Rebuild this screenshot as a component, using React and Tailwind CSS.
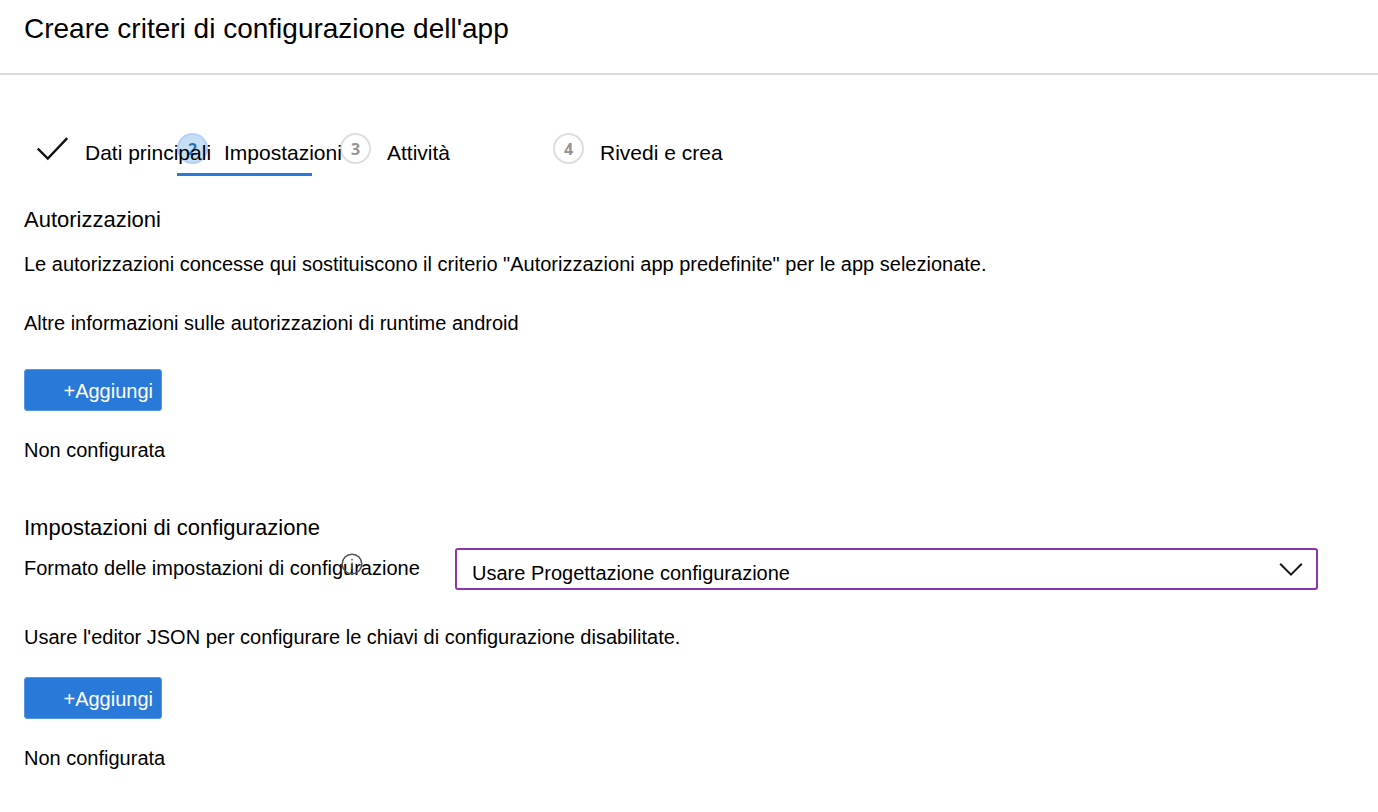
import React, { useState } from 'react';

const STEPS = [
  { label: 'Dati principali', state: 'done', width: 'w-[112px]' },
  { label: 'Impostazioni', state: 'active', width: 'w-[135px]' },
  { label: 'Attività', state: 'todo', width: 'w-[185px]' },
  { label: 'Rivedi e crea', state: 'todo', width: 'w-[185px]' },
];

const BADGES = {
  active: 'border-[#b3d1fa] bg-[#c7dff5] text-[#2a6fbf]',
  todo: 'border-[#dedede] bg-white text-[#949494]',
};

const StepMarker = ({ state, number }) => {
  if (state === 'done') {
    return (
      <svg className="w-8 h-8 shrink-0" viewBox="0 0 32 32" fill="none" stroke="#111" strokeWidth="2.4">
        <path d="M0.8 15.5 L10.8 25.5 L30.2 5.2" />
      </svg>
    );
  }
  return (
    <span className={`flex w-[31px] h-[31px] shrink-0 items-center justify-center rounded-full border-2 font-['Open_Sans',sans-serif] text-[16px] font-bold ${BADGES[state]}`}>
      {number}
    </span>
  );
};

const Step = ({ step, number }) => (
  <li className={`${step.width} shrink-0 pb-2 border-b-[3px] ${step.state === 'active' ? 'border-[#2979d9]' : 'border-transparent'}`}>
    <button type="button" className="flex items-start gap-4 whitespace-nowrap text-[21px] leading-6">
      <StepMarker state={step.state} number={number} />
      <span className="relative z-10 pt-2">{step.label}</span>
    </button>
  </li>
);

const AddButton = () => (
  <button type="button" className="flex h-[42px] w-[138px] items-center justify-end rounded-[3px] border border-[#5596e0] bg-[#2979d9] pr-2 pt-0.5 text-white">
    +Aggiungi
  </button>
);

const InfoIcon = () => (
  <svg className="absolute left-[317px] top-[5px] w-[22px] h-[22px]" viewBox="0 0 22 22" fill="none" stroke="#555" strokeWidth="1.5">
    <circle cx="11" cy="11" r="9.8" />
    <path d="M11 9.5 V16 M11 5.8 V7.4" />
  </svg>
);

export default function App() {
  const [format, setFormat] = useState('designer');

  return (
    <div className="min-h-screen bg-white font-['Liberation_Sans',Arial,sans-serif] text-[20px] leading-6 text-black">
      <header className="border-b-2 border-[#d9d9d9] px-6 pt-3 pb-7">
        <h1 className="text-[28px] leading-[33px]">Creare criteri di configurazione dell'app</h1>
      </header>

      <main className="pl-6 pr-[60px] pt-[58px] pb-10">
        <nav aria-label="Passaggi">
          <ol className="flex gap-7 pl-[13px]">
            {STEPS.map((s, i) => (
              <Step key={s.label} step={s} number={i + 1} />
            ))}
          </ol>
        </nav>

        <section className="mt-8">
          <h2 className="text-[22px] leading-6">Autorizzazioni</h2>
          <p className="mt-5">
            Le autorizzazioni concesse qui sostituiscono il criterio "Autorizzazioni app predefinite" per le app selezionate.
          </p>
          <a href="#runtime" className="mt-[35px] block w-fit">Altre informazioni sulle autorizzazioni di runtime android</a>
          <div className="mt-[34px] mb-[27px]">
            <AddButton />
          </div>
          <p>Non configurata</p>
        </section>

        <section className="mt-[54px]">
          <h2 className="text-[22px] leading-6">Impostazioni di configurazione</h2>
          <div className="mt-2 flex">
            <div className="relative w-[431px] shrink-0 pt-2">
              <label htmlFor="format" className="block whitespace-nowrap">Formato delle impostazioni di configurazione</label>
              <InfoIcon />
            </div>
            <div className="relative flex-1">
              <select
                id="format"
                value={format}
                onChange={(e) => setFormat(e.target.value)}
                className="block h-[42px] w-full appearance-none rounded-[3px] border-2 border-[#8f35ab] bg-white pl-[15px] pt-2"
              >
                <option value="designer">Usare Progettazione configurazione</option>
              </select>
              <svg className="pointer-events-none absolute right-[15px] top-3.5 w-6 h-4" viewBox="0 0 24 16" fill="none" stroke="#1a1a1a" strokeWidth="2">
                <path d="M1.2 1.8 L12 12.6 L22.8 1.8" />
              </svg>
            </div>
          </div>
          <p className="mt-[35px]">Usare l'editor JSON per configurare le chiavi di configurazione disabilitate.</p>
          <div className="mt-7 mb-[27px]">
            <AddButton />
          </div>
          <p>Non configurata</p>
        </section>
      </main>
    </div>
  );
}
